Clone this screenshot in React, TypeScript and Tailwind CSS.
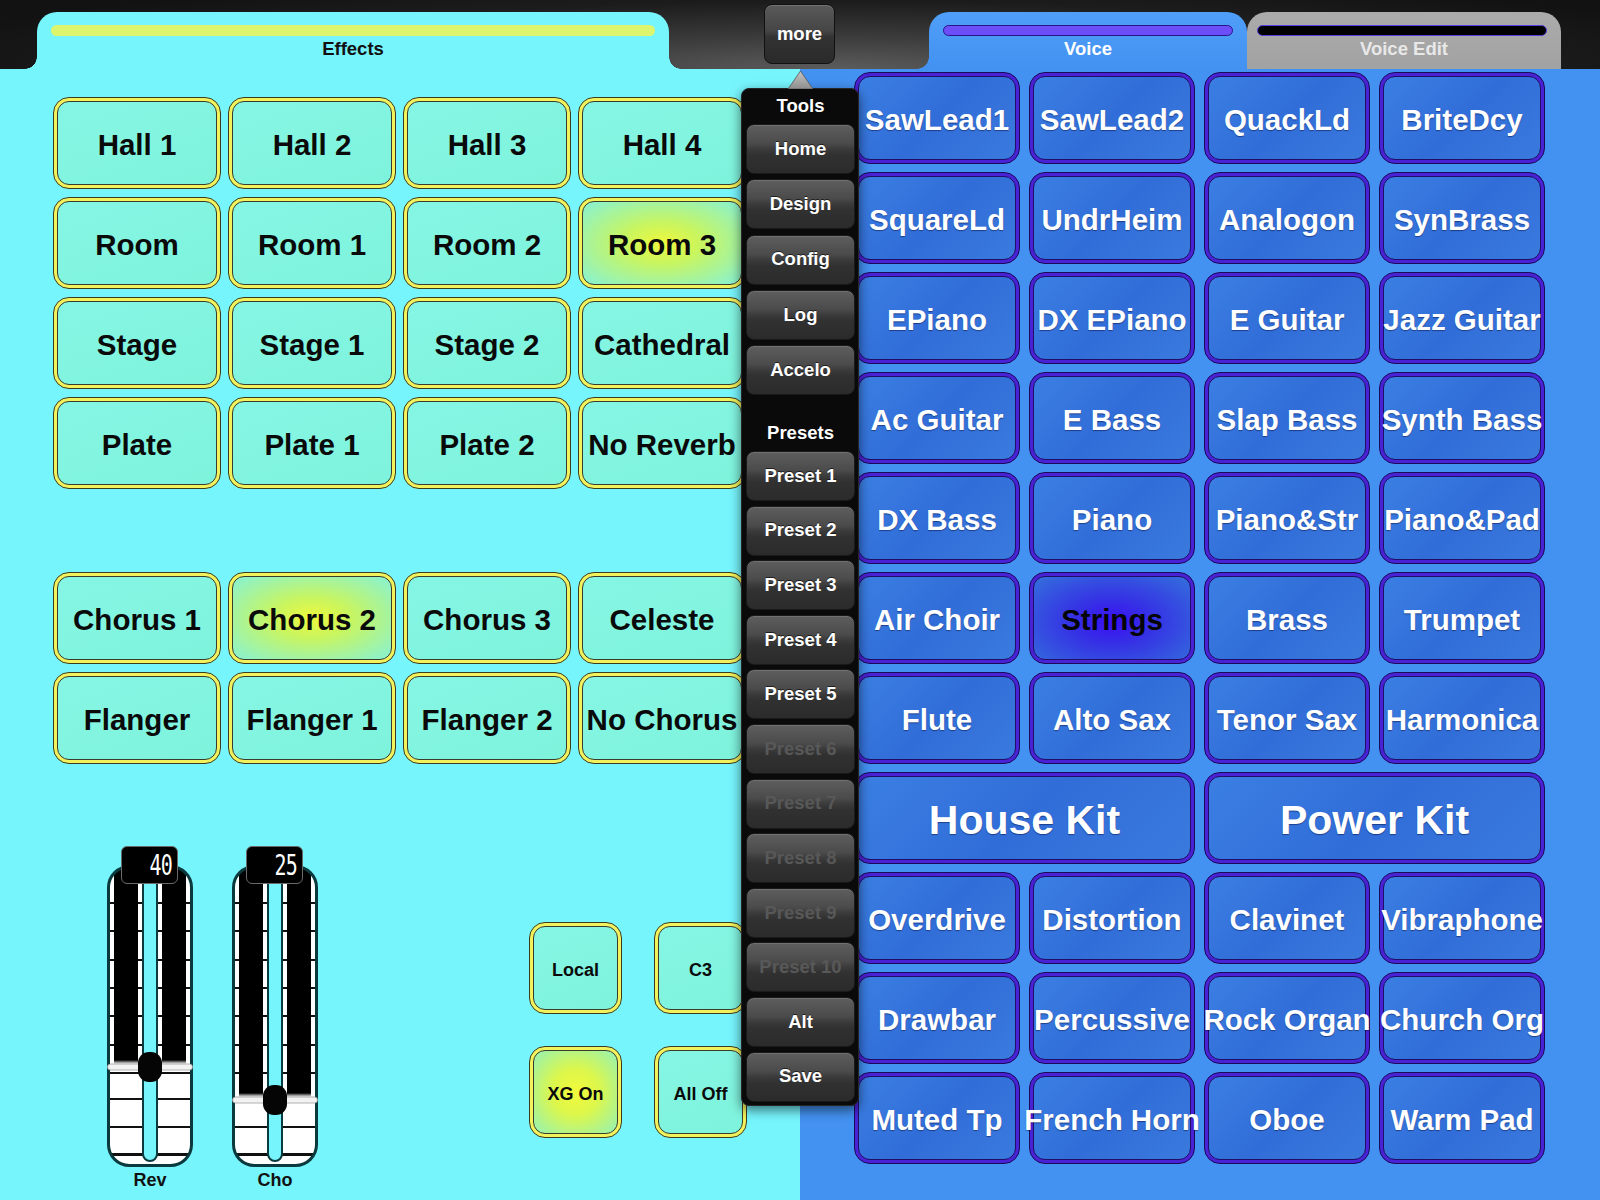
import React from "react";

const CYAN = "#77f5fd";

type BtnProps = { label: string; hot?: boolean; className?: string; text?: string; hotFill?: string };

function MintButton({ label, hot, className = "", text = "text-[29.5px]", hotFill }: BtnProps) {
  return (
    <div className={`rounded-[16px] border-[1.5px] border-[#3b3b20] bg-[#f2f25c] p-[3px] ${className}`}>
      <div
        className={`flex h-full w-full items-center justify-center rounded-[12px] border-[1.5px] border-[#3b3b2c] ${
          hot
            ? hotFill ?? "bg-[radial-gradient(ellipse_at_50%_50%,#eef83c_0%,#c8f560_35%,#86f2d6_100%)]"
            : "bg-[linear-gradient(160deg,#86f6e4_0%,#7ef3dc_100%)]"
        }`}
      >
        <span className={`translate-y-[2px] whitespace-nowrap font-bold leading-none text-[#0a0a0a] ${text}`}>{label}</span>
      </div>
    </div>
  );
}

function BlueButton({ label, hot, className = "", text = "text-[29.5px]" }: BtnProps) {
  return (
    <div className={`rounded-[16px] border-[1.5px] border-[#1a0b58] bg-[#4a22d6] p-[3px] ${className}`}>
      <div
        className={`flex h-full w-full items-center justify-center rounded-[12px] border-[1.5px] border-[#1f0d66] ${
          hot
            ? "bg-[radial-gradient(ellipse_at_50%_55%,#3a0ff2_0%,#3535e4_40%,#3470dc_100%)]"
            : "bg-[linear-gradient(135deg,#3b7fe3_0%,#316dd8_50%,#3a7ade_100%)]"
        }`}
      >
        <span
          className={`translate-y-[2px] whitespace-nowrap font-bold leading-none ${
            hot ? "text-[#050505]" : "text-white [text-shadow:0_1px_1px_rgba(0,0,40,0.45)]"
          } ${text}`}
        >
          {label}
        </span>
      </div>
    </div>
  );
}

function MenuButton({ label, dim }: { label: string; dim?: boolean }) {
  return (
    <div className="flex h-[50px] w-[109px] items-center justify-center rounded-[8px] border border-[#1a1a1a] bg-[linear-gradient(to_bottom,#5e5e5e_0%,#4b4b4b_38%,#3b3b3b_50%,#313131_62%,#2b2b2b_100%)] shadow-[inset_0_1px_0_rgba(255,255,255,0.12)]">
      <span
        className={`text-[18.5px] font-bold leading-none ${
          dim ? "text-[#585858]" : "text-white [text-shadow:0_-1px_0_rgba(0,0,0,0.6)]"
        }`}
      >
        {label}
      </span>
    </div>
  );
}

function Fader({ level, value, label, id }: { level: number; value: string; label: string; id: string }) {
  const ticks = [38, 66, 95, 123, 151, 180, 208, 234, 262, 289];
  return (
    <div className="flex w-[86px] flex-col items-center">
      <div className="relative w-[86px] pt-[19px]">
        <svg width="86" height="302" viewBox="0 0 86 302" className="block">
          <defs>
            <clipPath id={`clip-${id}`}>
              <rect x="1.5" y="1.5" width="83" height="299" rx="21" />
            </clipPath>
            <linearGradient id={`fade-${id}`} x1="0" y1="0" x2="0" y2="1">
              <stop offset="0" stopColor="#000" stopOpacity="1" />
              <stop offset="1" stopColor="#000" stopOpacity="0" />
            </linearGradient>
          </defs>
          <g clipPath={`url(#clip-${id})`}>
            <rect x="0" y="0" width="86" height="302" fill="#fff" />
            {ticks.map((y) => (
              <rect key={y} x="0" y={y - 1} width="86" height={y > 280 ? 3 : 2} fill="#111" />
            ))}
            <rect x="7" y="0" width="24" height={level - 7} fill="#000" />
            <rect x="55" y="0" width="24" height={level - 7} fill="#000" />
            <rect x="7" y={level - 7} width="24" height="4" fill={`url(#fade-${id})`} />
            <rect x="55" y={level - 7} width="24" height="4" fill={`url(#fade-${id})`} />
            <rect x="36" y="-12" width="14" height="308" rx="7" fill={CYAN} stroke="#0b3b3f" strokeWidth="2" />
          </g>
          <rect x="1.5" y="1.5" width="83" height="299" rx="21" fill="none" stroke="#0b3a3e" strokeWidth="3" />
          <rect x="0.5" y={level - 3} width="85" height="6" rx="3" fill="#f2f2f2" stroke="#9a9a9a" strokeWidth="0.75" />
          <rect x="31" y={level - 15} width="24" height="30" rx="11" fill="#050505" />
        </svg>
        <div className="absolute left-[14px] top-0 flex h-[38px] w-[57px] items-center justify-end rounded-[6px] border-[1.5px] border-[#6a6a6a] bg-black pr-[5px]">
          <span className="inline-block origin-right scale-x-[0.8] scale-y-[1.15] font-['DejaVu_Sans_Mono',monospace] text-[25px] leading-none tracking-[-1px] text-white">
            {value}
          </span>
        </div>
      </div>
      <div className="mt-[3px] text-[18px] font-bold leading-[21px] text-[#111]">{label}</div>
    </div>
  );
}

const reverbs = [
  ["Hall 1", "Hall 2", "Hall 3", "Hall 4"],
  ["Room", "Room 1", "Room 2", "Room 3"],
  ["Stage", "Stage 1", "Stage 2", "Cathedral"],
  ["Plate", "Plate 1", "Plate 2", "No Reverb"],
];
const choruses = [
  ["Chorus 1", "Chorus 2", "Chorus 3", "Celeste"],
  ["Flanger", "Flanger 1", "Flanger 2", "No Chorus"],
];
const voicesTop = [
  ["SawLead1", "SawLead2", "QuackLd", "BriteDcy"],
  ["SquareLd", "UndrHeim", "Analogon", "SynBrass"],
  ["EPiano", "DX EPiano", "E Guitar", "Jazz Guitar"],
  ["Ac Guitar", "E Bass", "Slap Bass", "Synth Bass"],
  ["DX Bass", "Piano", "Piano&Str", "Piano&Pad"],
  ["Air Choir", "Strings", "Brass", "Trumpet"],
  ["Flute", "Alto Sax", "Tenor Sax", "Harmonica"],
];
const voicesBottom = [
  ["Overdrive", "Distortion", "Clavinet", "Vibraphone"],
  ["Drawbar", "Percussive", "Rock Organ", "Church Org"],
  ["Muted Tp", "French Horn", "Oboe", "Warm Pad"],
];

export default function App() {
  const hotEffects = new Set(["Room 3", "Chorus 2"]);
  return (
    <div className="relative h-[1200px] w-[1600px] overflow-hidden font-['Liberation_Sans',Arial,sans-serif]">
      {/* tab strip */}
      <div className="flex h-[69px] items-end bg-[radial-gradient(ellipse_60%_140%_at_52%_100%,#5c5c5c_0%,#3a3a3a_35%,#1c1c1c_70%,#121212_100%)]">
        <div className="w-[37px] shrink-0" />
        <div className="relative h-[57px] w-[632px] shrink-0 rounded-t-[20px] bg-[#77f5fd]">
          <div className="absolute -left-[12px] bottom-0 h-[12px] w-[12px] bg-[radial-gradient(circle_at_0_0,transparent_11.5px,#77f5fd_12px)]" />
          <div className="absolute -right-[12px] bottom-0 h-[12px] w-[12px] bg-[radial-gradient(circle_at_100%_0,transparent_11.5px,#77f5fd_12px)]" />
          <div className="mx-[14px] mt-[13px] h-[11px] rounded-full bg-[#dcf56c]" />
          <div className="mt-[2px] text-center text-[18.5px] font-bold leading-[21px] text-[#111]">Effects</div>
        </div>
        <div className="w-[95px] shrink-0" />
        <div className="mb-auto mt-[4px] flex h-[60px] w-[71px] shrink-0 items-center justify-center rounded-[8px] border border-[#111] bg-[linear-gradient(to_bottom,#5a5a5a_0%,#454545_45%,#333_55%,#2a2a2a_100%)] shadow-[inset_0_1px_0_rgba(255,255,255,0.15)]">
          <span className="text-[18.5px] font-bold leading-none text-white">more</span>
        </div>
        <div className="w-[94px] shrink-0" />
        <div className="relative h-[57px] w-[318px] shrink-0 rounded-t-[20px] bg-[linear-gradient(to_bottom,#4f9ff8,#4391f1)]">
          <div className="absolute -left-[12px] bottom-0 h-[12px] w-[12px] bg-[radial-gradient(circle_at_0_0,transparent_11.5px,#4391f1_12px)]" />
          <div className="mx-[14px] mt-[13px] h-[11px] rounded-full border border-[#2a1288] bg-[#6b4ef7]" />
          <div className="mt-[2px] text-center text-[18.5px] font-bold leading-[21px] text-white">Voice</div>
        </div>
        <div className="relative h-[57px] w-[314px] shrink-0 rounded-t-[20px] bg-[linear-gradient(to_bottom,#ababab,#a2a2a2)]">
          <div className="ml-[10px] mr-[14px] mt-[13px] h-[11px] rounded-full border-[1.5px] border-[#5b3ce0] bg-black" />
          <div className="mt-[2px] text-center text-[18.5px] font-bold leading-[21px] text-[#e8e8e8]">Voice Edit</div>
        </div>
      </div>

      <div className="flex h-[1131px]">
        {/* effects side */}
        <div className="flex w-[800px] shrink-0 flex-col bg-[#77f5fd] pl-[53px] pt-[28px]">
          <div className="grid w-[694px] grid-cols-[repeat(4,168px)] gap-x-[7px] gap-y-[8px]">
            {reverbs.flat().map((l) => (
              <MintButton key={l} label={l} hot={hotEffects.has(l)} className="h-[92px]" />
            ))}
          </div>
          <div className="mt-[83px] grid w-[694px] grid-cols-[repeat(4,168px)] gap-x-[7px] gap-y-[8px]">
            {choruses.flat().map((l) => (
              <MintButton key={l} label={l} hot={hotEffects.has(l)} className="h-[92px]" />
            ))}
          </div>
          <div className="mt-[82px] flex items-start">
            <div className="ml-[54px]">
              <Fader id="rev" level={202} value="40" label="Rev" />
            </div>
            <div className="ml-[39px]">
              <Fader id="cho" level={235} value="25" label="Cho" />
            </div>
            <div className="ml-[211px] mt-[76px] grid grid-cols-[repeat(2,93px)] gap-x-[32px] gap-y-[32px]">
              <MintButton label="Local" className="h-[92px]" text="text-[18px]" />
              <MintButton label="C3" className="h-[92px]" text="text-[18px]" />
              <MintButton
                label="XG On"
                hot
                className="h-[92px]"
                text="text-[18px]"
                hotFill="bg-[radial-gradient(ellipse_at_50%_50%,#f2fa3a_0%,#dcf74c_40%,#a6f39a_85%,#92f2c2_100%)]"
              />
              <MintButton label="All Off" className="h-[92px]" text="text-[18px]" />
            </div>
          </div>
        </div>

        {/* voice side */}
        <div className="w-[800px] shrink-0 bg-[#4391f1] pl-[54px] pt-[3px]">
          <div className="grid w-[692px] grid-cols-[repeat(4,166px)] gap-x-[9px] gap-y-[8px]">
            {voicesTop.flat().map((l) => (
              <BlueButton key={l} label={l} hot={l === "Strings"} className="h-[92px]" />
            ))}
            <BlueButton label="House Kit" className="col-span-2 h-[92px]" text="text-[41px]" />
            <BlueButton label="Power Kit" className="col-span-2 h-[92px]" text="text-[41px]" />
            {voicesBottom.flat().map((l) => (
              <BlueButton key={l} label={l} className="h-[92px]" />
            ))}
          </div>
        </div>
      </div>

      {/* tools popover */}
      <div className="absolute left-[741px] top-[88px] h-[1018px] w-[118px] rounded-[8px] border border-[#262626] bg-[#0a0a0a] pl-[4px] pr-[3px] shadow-[0_4px_12px_rgba(0,0,0,0.55)]">
        <svg width="27" height="19" viewBox="0 0 27 19" className="absolute -top-[19px] left-[45px]">
          <defs>
            <linearGradient id="arrowFill" x1="0" y1="0" x2="0" y2="1">
              <stop offset="0" stopColor="#c4c4c4" />
              <stop offset="1" stopColor="#8e8e8e" />
            </linearGradient>
          </defs>
          <path d="M13.5 1 L26 19 L1 19 Z" fill="url(#arrowFill)" stroke="#555" strokeWidth="0.8" />
        </svg>
        <div className="flex h-[35px] items-center justify-center pb-[1px] text-[18.5px] font-bold leading-none text-white">
          Tools
        </div>
        <div className="flex flex-col gap-[5.25px]">
          {["Home", "Design", "Config", "Log", "Accelo"].map((l) => (
            <MenuButton key={l} label={l} />
          ))}
        </div>
        <div className="flex h-[56px] items-end justify-center pb-[8px] text-[18.5px] font-bold leading-[21px] text-white">
          Presets
        </div>
        <div className="flex flex-col gap-[4.6px]">
          {["Preset 1", "Preset 2", "Preset 3", "Preset 4", "Preset 5"].map((l) => (
            <MenuButton key={l} label={l} />
          ))}
          {["Preset 6", "Preset 7", "Preset 8", "Preset 9", "Preset 10"].map((l) => (
            <MenuButton key={l} label={l} dim />
          ))}
          <MenuButton label="Alt" />
          <MenuButton label="Save" />
        </div>
      </div>
    </div>
  );
}
